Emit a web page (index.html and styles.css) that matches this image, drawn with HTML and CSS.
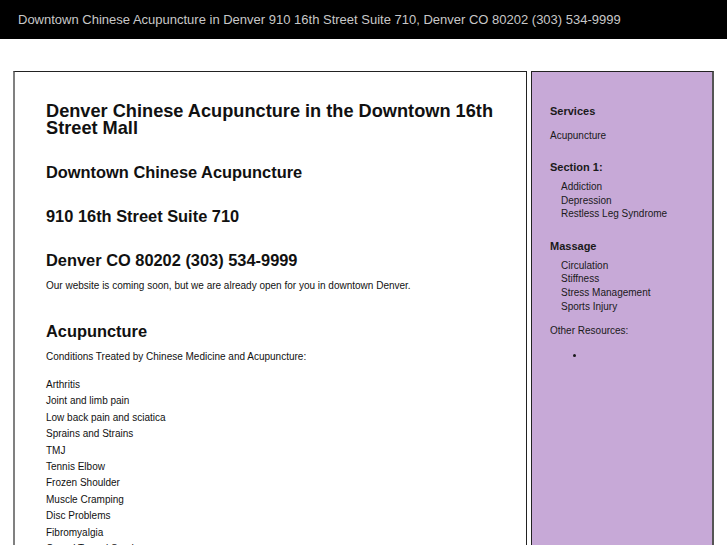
FILE: index.html
```html
<!DOCTYPE html>
<html>
<head>
<meta charset="utf-8">
<title>Downtown Chinese Acupuncture</title>
<link rel="stylesheet" href="styles.css">
</head>
<body>
<div class="topbar">Downtown Chinese Acupuncture in Denver 910 16th Street Suite 710, Denver CO 80202 (303) 534-9999</div>
<div class="wrap">
  <div class="main">
    <h1>Denver Chinese Acupuncture in the Downtown 16th Street Mall</h1>
    <h2 class="first">Downtown Chinese Acupuncture</h2>
    <h2>910 16th Street Suite 710</h2>
    <h2>Denver CO 80202 (303) 534-9999</h2>
    <p class="intro">Our website is coming soon, but we are already open for you in downtown Denver.</p>
    <h2 class="sect">Acupuncture</h2>
    <p class="cond">Conditions Treated by Chinese Medicine and Acupuncture:</p>
    <ul class="conditions">
      <li>Arthritis</li>
      <li>Joint and limb pain</li>
      <li>Low back pain and sciatica</li>
      <li>Sprains and Strains</li>
      <li>TMJ</li>
      <li>Tennis Elbow</li>
      <li>Frozen Shoulder</li>
      <li>Muscle Cramping</li>
      <li>Disc Problems</li>
      <li>Fibromyalgia</li>
      <li>Carpal Tunnel Syndrome</li>
      <li>Headaches</li>
    </ul>
  </div>
  <div class="side">
    <h3 class="services">Services</h3>
    <p class="sidelink">Acupuncture</p>
    <h3 class="sec1">Section 1:</h3>
    <ul class="sub">
      <li>Addiction</li>
      <li>Depression</li>
      <li>Restless Leg Syndrome</li>
    </ul>
    <h3 class="massage">Massage</h3>
    <ul class="sub">
      <li>Circulation</li>
      <li>Stiffness</li>
      <li>Stress Management</li>
      <li>Sports Injury</li>
    </ul>
    <p class="other">Other Resources:</p>
    <ul class="res">
      <li></li>
    </ul>
  </div>
</div>
</body>
</html>
```

FILE: styles.css
```css
html, body {
  margin: 0;
  padding: 0;
  background: #fff;
  font-family: "Liberation Sans", Arial, sans-serif;
  color: #111;
}

.topbar {
  background: #000;
  color: #c8c8c8;
  height: 39px;
  line-height: 39px;
  font-size: 13px;
  padding-left: 18px;
  box-sizing: border-box;
}

.wrap {
  display: flex;
  gap: 4px;
  padding: 32px 13px 0 13px;
  align-items: stretch;
  min-height: 600px;
}

.main {
  width: 514px;
  box-sizing: border-box;
  border: 1px solid #222;
  border-left: 2px solid #808080;
  padding: 31px 28px 20px 31px;
  background: #fff;
}

.main h1 {
  font-size: 18.2px;
  line-height: 17px;
  margin: 0;
  font-weight: bold;
}

.main h2 {
  font-size: 16.4px;
  line-height: 20px;
  margin: 24px 0 0 0;
  font-weight: bold;
}

.main h2.first {
  margin-top: 25px;
}

.main p {
  font-size: 10px;
  line-height: 13px;
  margin: 0;
}

.main p.intro {
  margin-top: 9px;
}

.main h2.sect {
  margin-top: 29px;
}

.main p.cond {
  margin-top: 9px;
}

.conditions {
  list-style: none;
  margin: 14px 0 0 0;
  padding: 0;
  font-size: 10px;
  line-height: 16.4px;
}

.side {
  width: 183px;
  box-sizing: border-box;
  background: #c7a9d7;
  border: 1px solid #222;
  border-right: 2px solid #555;
  padding: 28px 10px 20px 18px;
  color: #1a1a1a;
}

.side h3 {
  font-size: 11px;
  line-height: 14px;
  margin: 16px 0 0 0;
  font-weight: bold;
}

.side h3.services {
  margin-top: 4px;
}

.side h3.sec1 {
  margin-top: 18px;
}

.side h3.massage {
  margin-top: 18px;
}

.side p {
  font-size: 10px;
  line-height: 13px;
  margin: 0;
}

.side p.sidelink {
  margin-top: 11px;
}

.sub {
  list-style: none;
  margin: 6px 0 0 0;
  padding: 0 0 0 11px;
  font-size: 10px;
  line-height: 13.6px;
}

.side p.other {
  margin-top: 11px;
}

.res {
  margin: 12px 0 0 0;
  padding-left: 36px;
  font-size: 10px;
  line-height: 13px;
}

.res li {
  height: 13px;
}
```
